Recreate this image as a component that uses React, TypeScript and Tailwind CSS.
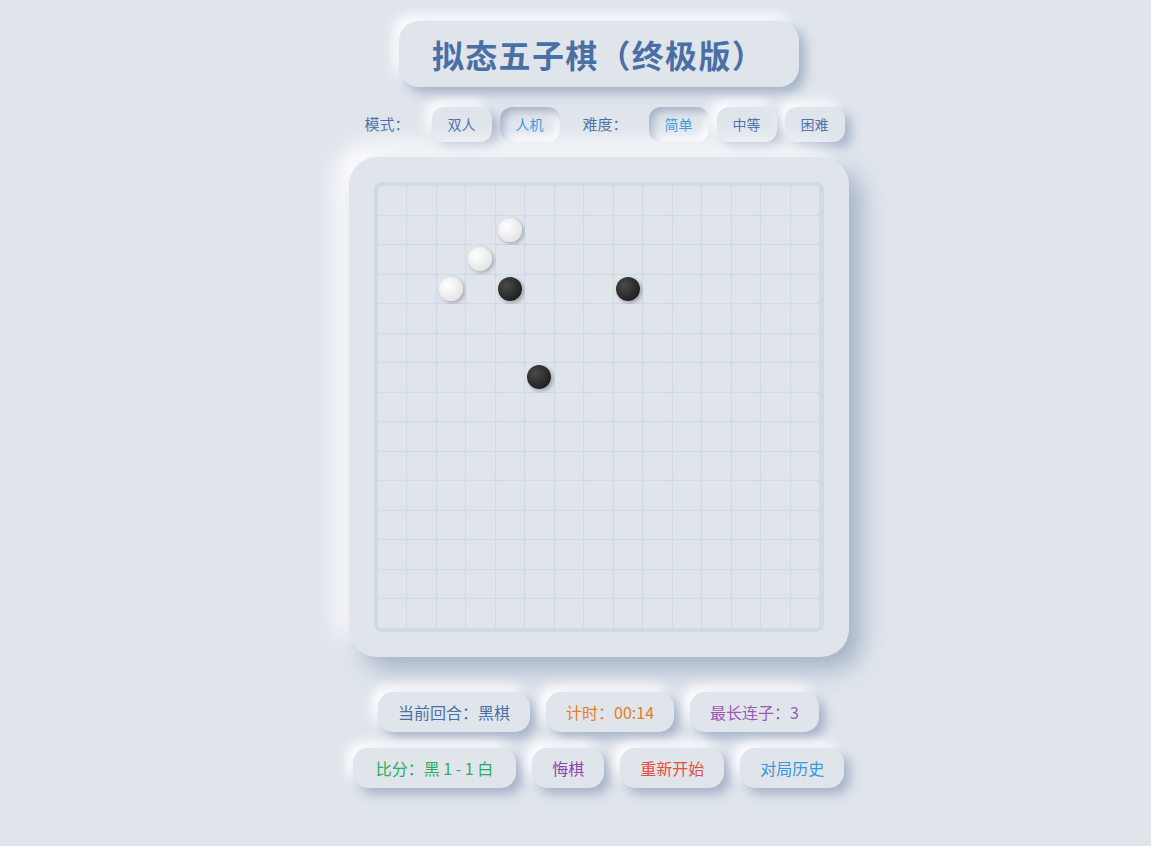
import React from "react";

const N = 15;

// stones on the board: [col, row, color]
const STONES: [number, number, "b" | "w"][] = [
  [4, 1, "w"],
  [3, 2, "w"],
  [2, 3, "w"],
  [4, 3, "b"],
  [8, 3, "b"],
  [5, 6, "b"],
];

const raised = "shadow-[6px_6px_12px_#a3b1c6,-6px_-6px_12px_#ffffff]";
const pressed = "shadow-[inset_4px_4px_8px_#a3b1c6,inset_-4px_-4px_8px_#ffffff]";

function ModeButton({ label, active }: { label: string; active?: boolean }) {
  return (
    <button
      className={`h-[35px] w-[60px] rounded-[12px] bg-[#e0e5ec] text-[14px] ${
        active ? `${pressed} text-[#3498db]` : `${raised} text-[#4a6fa5]`
      }`}
    >
      {label}
    </button>
  );
}

function Pill({ children, color, wide }: { children: React.ReactNode; color: string; wide?: boolean }) {
  return (
    <div
      className={`h-[40px] rounded-[15px] bg-[#e0e5ec] text-[16px] leading-[40px] ${wide ? "px-[23px]" : "px-5"} ${raised} ${color}`}
    >
      {children}
    </div>
  );
}

function Board() {
  const cells = [];
  for (let r = 0; r < N; r++) {
    for (let c = 0; c < N; c++) {
      const s = STONES.find((st) => st[0] === c && st[1] === r);
      cells.push(
        <div key={`${r}-${c}`} className="relative flex items-center justify-center rounded-[2px] bg-[#e0e5ec]">
          {s && s[2] === "b" && (
            <div className="h-[24px] w-[24px] rounded-full bg-[radial-gradient(circle_at_35%_35%,#4a4a4a,#111111)] shadow-[2px_2px_4px_rgba(0,0,0,0.3)]" />
          )}
          {s && s[2] === "w" && (
            <div className="h-[24px] w-[24px] rounded-full bg-[radial-gradient(circle_at_35%_35%,#ffffff,#dcdcdc)] shadow-[2px_2px_4px_rgba(0,0,0,0.25)]" />
          )}
        </div>
      );
    }
  }
  return (
    <div className="rounded-[28px] bg-[#e0e5ec] p-[25px] shadow-[12px_12px_24px_#a3b1c6,-12px_-12px_24px_#ffffff]">
      <div className="grid h-[450px] w-[450px] grid-cols-15 grid-rows-15 gap-px rounded-[8px] bg-[#d1d9e6] p-1">
        {cells}
      </div>
    </div>
  );
}

export default function App() {
  return (
    <div
      className="min-h-[846px] bg-[#e0e5ec] pl-[46px] pt-[21px]"
      style={{ fontFamily: '"Noto Sans CJK SC", "Noto Sans", sans-serif' }}
    >
      <div className="flex flex-col items-center">
        <div className={`flex h-[66px] w-[400px] items-center justify-center rounded-[20px] bg-[#e0e5ec] ${raised}`}>
          <h1 className="text-[32px] font-bold tracking-[1.3px] text-[#4a6fa5]">拟态五子棋（终极版）</h1>
        </div>

        <div className="mt-[20px] flex items-center pl-[12px]">
          <span className="mr-[22px] text-[15px] text-[#4a6fa5]">模式：</span>
          <div className="flex gap-[8px]">
            <ModeButton label="双人" />
            <ModeButton label="人机" active />
          </div>
          <span className="ml-[23px] mr-[21px] text-[15px] text-[#4a6fa5]">难度：</span>
          <div className="flex gap-[8px]">
            <ModeButton label="简单" active />
            <ModeButton label="中等" />
            <ModeButton label="困难" />
          </div>
        </div>

        <div className="mt-[15px]">
          <Board />
        </div>

        <div className="mt-[35px] flex gap-4">
          <Pill color="text-[#4a6fa5]">当前回合：黑棋</Pill>
          <Pill color="text-[#e67e22]">计时：00:14</Pill>
          <Pill color="text-[#9b59b6]">最长连子：3</Pill>
        </div>
        <div className="mt-4 flex gap-4">
          <Pill color="text-[#27ae60]" wide>
            比分：黑 1 - 1 白
          </Pill>
          <Pill color="text-[#8e44ad]">悔棋</Pill>
          <Pill color="text-[#e74c3c]">重新开始</Pill>
          <Pill color="text-[#3498db]">对局历史</Pill>
        </div>
      </div>
    </div>
  );
}
